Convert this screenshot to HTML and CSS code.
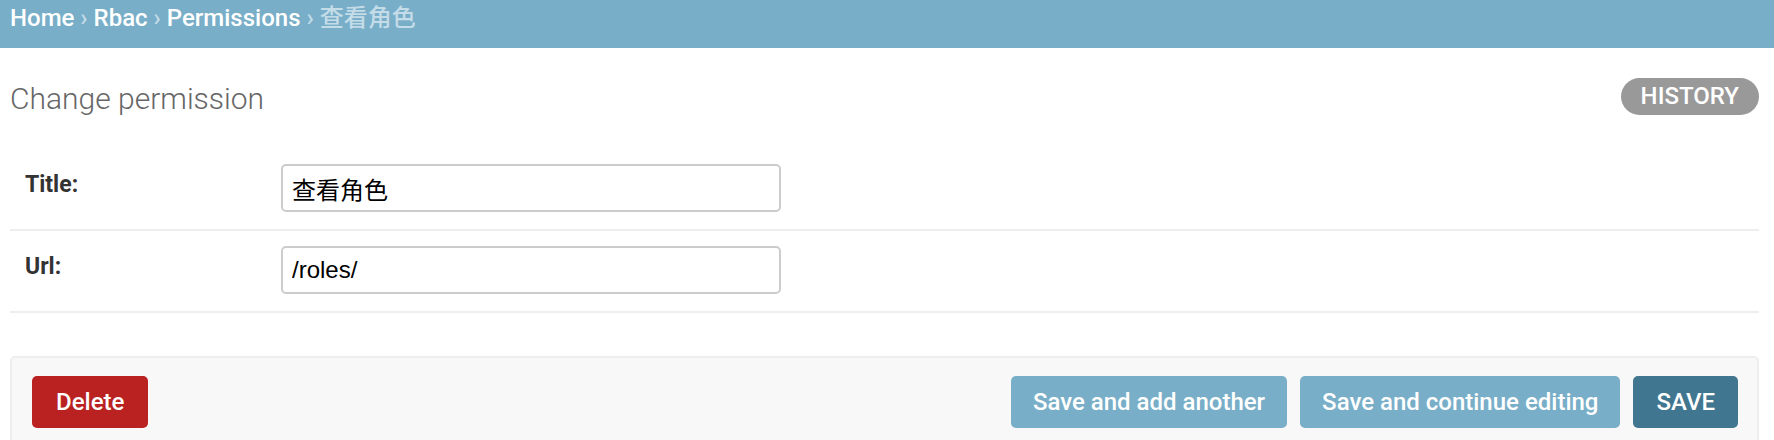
FILE: index.html
```html
<!DOCTYPE html>
<html lang="zh">
<head>
	<meta charset="UTF-8">
	<title>Change permission</title>
	<link rel="stylesheet" href="styles.css">
</head>
<body>
	<!-- 面包屑 -->
	<div class="breadcrumbs">
		<a href="#">Home</a> › <a href="#">Rbac</a> › <a href="#">Permissions</a> › 查看角色
	</div>

	<div class="content">
		<div class="title-row">
			<h1>Change permission</h1>
			<a href="#" class="historylink">History</a>
		</div>

		<form>
			<div class="form-row">
				<label>Title:</label>
				<input type="text" class="vTextField" value="查看角色">
			</div>
			<div class="form-row">
				<label>Url:</label>
				<input type="text" class="vTextField" value="/roles/">
			</div>

			<!-- 底部按钮 -->
			<div class="submit-row">
				<a href="#" class="deletelink">Delete</a>
				<div class="save-group">
					<input type="button" value="Save and add another">
					<input type="button" value="Save and continue editing">
					<input type="button" class="default" value="Save">
				</div>
			</div>
		</form>
	</div>
</body>
</html>
```

FILE: styles.css
```css
* {
	margin: 0;
	padding: 0;
	box-sizing: border-box;
}
body {
	font-family: Roboto, "Noto Sans CJK SC", sans-serif;
	color: #333;
	background: #fff;
}
a {
	text-decoration: none;
}
.breadcrumbs {
	background: #79aec8;
	height: 48px;
	padding: 4px 10px 0;
	font-size: 24px;
	font-weight: 500;
	line-height: 28px;
	color: #c4dce8;
}
.breadcrumbs a {
	color: #fff;
}
.content {
	padding: 0 15px 0 10px;
}
.title-row {
	display: flex;
	justify-content: space-between;
	align-items: flex-start;
	margin-top: 31px;
}
h1 {
	font-size: 30px;
	font-weight: 300;
	line-height: 40px;
	color: #666;
}
.historylink {
	margin-top: -1px;
	height: 37px;
	line-height: 37px;
	padding: 0 20px;
	border-radius: 19px;
	background: #999;
	color: #fff;
	font-size: 24px;
	font-weight: 500;
	text-transform: uppercase;
}
form {
	margin-top: 30px;
}
.form-row {
	display: flex;
	padding: 15px 0 17px 15px;
	border-bottom: 2px solid #eee;
}
.form-row label {
	width: 256px;
	padding-top: 5px;
	font-size: 23px;
	font-weight: bold;
	line-height: 32px;
	color: #333;
}
.vTextField {
	width: 500px;
	height: 48px;
	padding: 0 9px;
	border: 2px solid #ccc;
	border-radius: 5px;
	font-family: "Liberation Sans", "Noto Sans CJK SC", sans-serif;
	font-size: 24px;
	color: #000;
	background: #fff;
}
.submit-row {
	display: flex;
	justify-content: space-between;
	margin-top: 43px;
	padding: 18px 19px 30px 20px;
	background: #f8f8f8;
	border: 2px solid #eee;
	border-radius: 5px;
}
.deletelink, .save-group input {
	height: 52px;
	line-height: 52px;
	border: none;
	border-radius: 5px;
	color: #fff;
	font-family: Roboto, sans-serif;
	font-size: 24px;
	font-weight: 500;
}
.deletelink {
	display: block;
	padding: 0 24px;
	background: #ba2121;
}
.save-group {
	display: flex;
	gap: 13px;
}
.save-group input {
	padding: 0 22px;
	background: #79aec8;
}
.save-group input.default {
	padding: 0 23px;
	background: #417690;
	text-transform: uppercase;
}
```
